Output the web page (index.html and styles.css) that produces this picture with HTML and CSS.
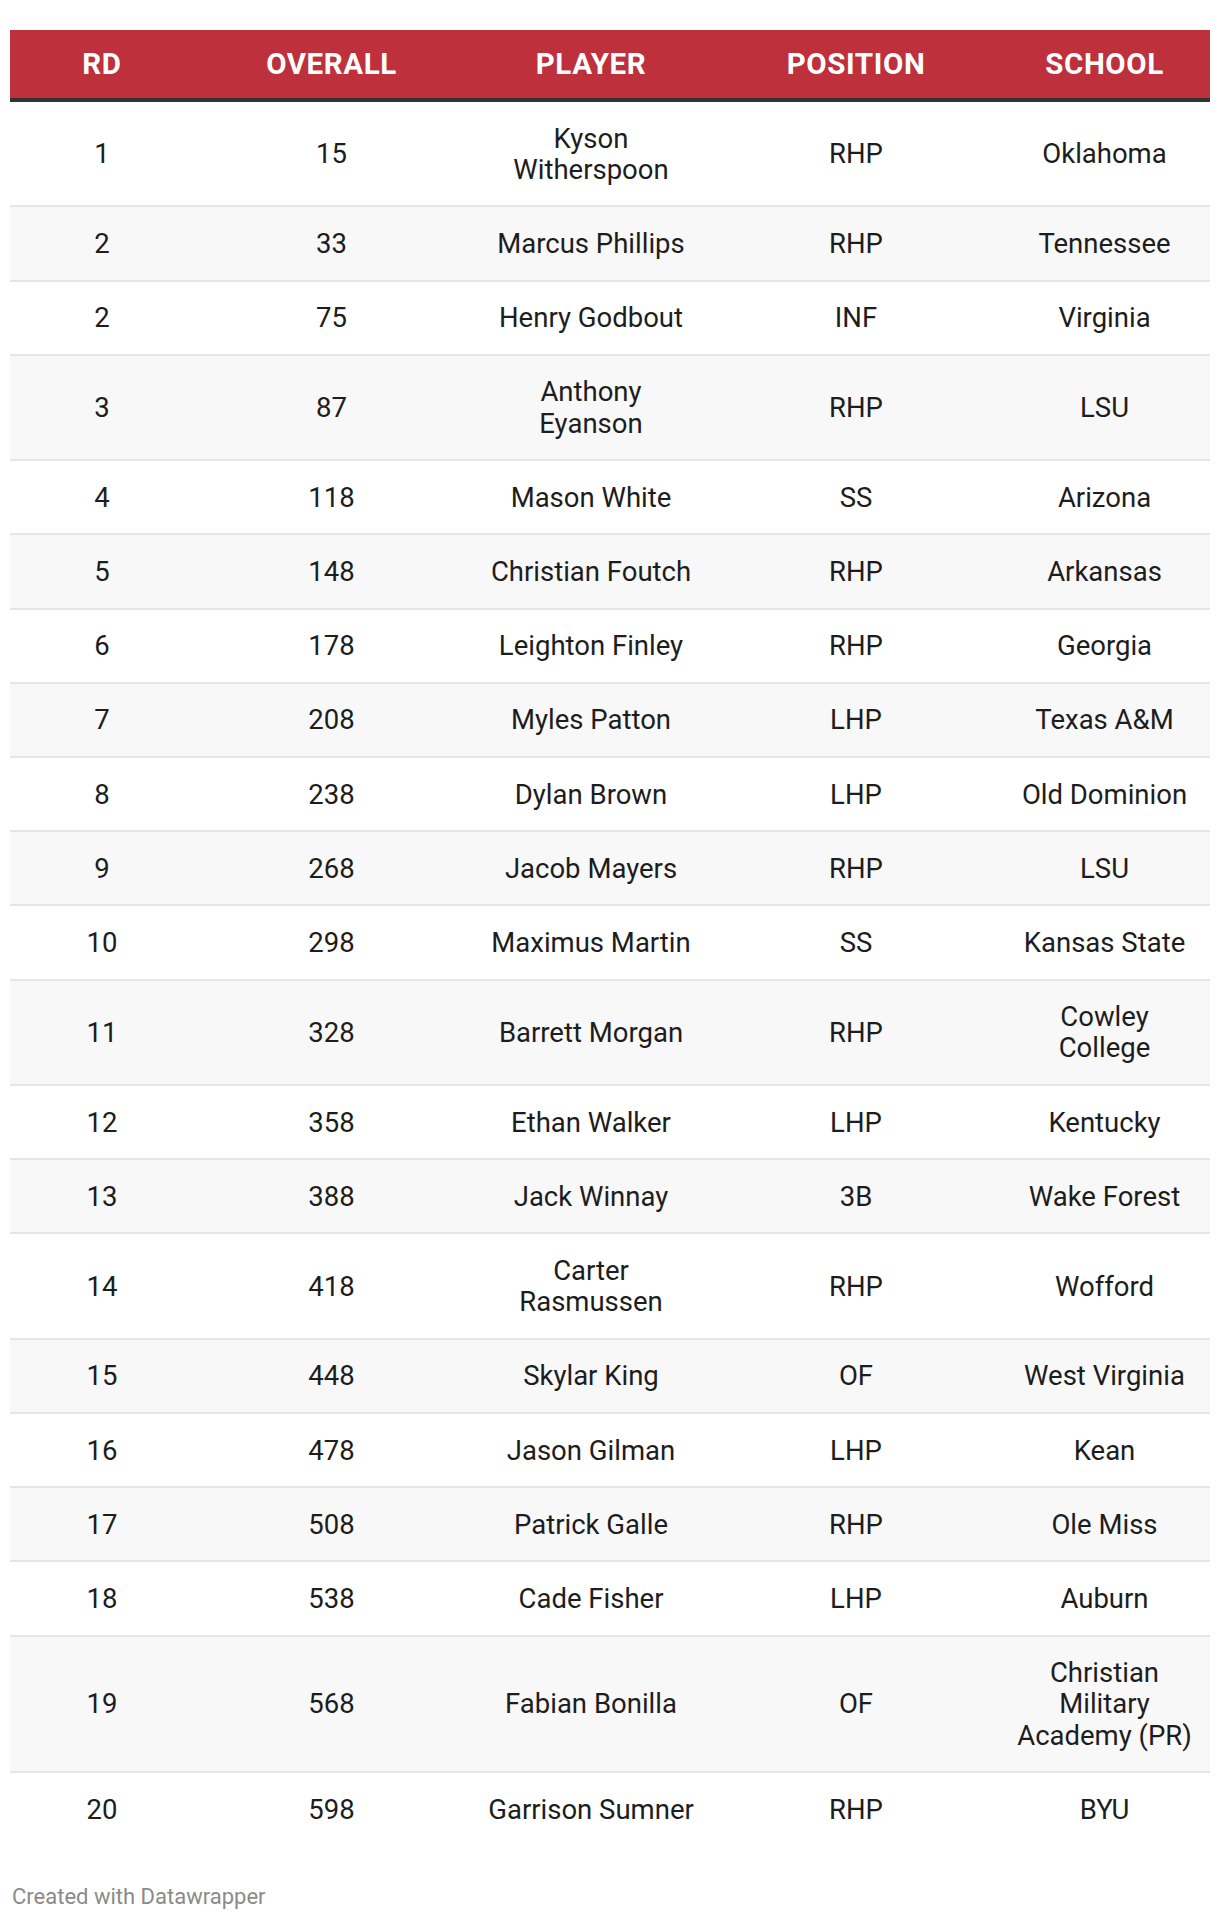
FILE: index.html
```html
<!DOCTYPE html>
<html lang="en">
<head>
<meta charset="utf-8">
<title>Draft picks</title>
<link rel="stylesheet" href="styles.css">
</head>
<body>
<div class="chart">
  <table class="picks">
    <colgroup>
      <col class="c-rd">
      <col class="c-overall">
      <col class="c-player">
      <col class="c-pos">
      <col class="c-school">
    </colgroup>
    <thead>
      <tr>
        <th>RD</th>
        <th>OVERALL</th>
        <th>PLAYER</th>
        <th>POSITION</th>
        <th>SCHOOL</th>
      </tr>
    </thead>
    <tbody>
      <tr><td>1</td><td>15</td><td>Kyson<br>Witherspoon</td><td>RHP</td><td>Oklahoma</td></tr>
      <tr><td>2</td><td>33</td><td>Marcus Phillips</td><td>RHP</td><td>Tennessee</td></tr>
      <tr><td>2</td><td>75</td><td>Henry Godbout</td><td>INF</td><td>Virginia</td></tr>
      <tr><td>3</td><td>87</td><td>Anthony<br>Eyanson</td><td>RHP</td><td>LSU</td></tr>
      <tr><td>4</td><td>118</td><td>Mason White</td><td>SS</td><td>Arizona</td></tr>
      <tr><td>5</td><td>148</td><td>Christian Foutch</td><td>RHP</td><td>Arkansas</td></tr>
      <tr><td>6</td><td>178</td><td>Leighton Finley</td><td>RHP</td><td>Georgia</td></tr>
      <tr><td>7</td><td>208</td><td>Myles Patton</td><td>LHP</td><td>Texas A&amp;M</td></tr>
      <tr><td>8</td><td>238</td><td>Dylan Brown</td><td>LHP</td><td>Old Dominion</td></tr>
      <tr><td>9</td><td>268</td><td>Jacob Mayers</td><td>RHP</td><td>LSU</td></tr>
      <tr><td>10</td><td>298</td><td>Maximus Martin</td><td>SS</td><td>Kansas State</td></tr>
      <tr><td>11</td><td>328</td><td>Barrett Morgan</td><td>RHP</td><td>Cowley<br>College</td></tr>
      <tr><td>12</td><td>358</td><td>Ethan Walker</td><td>LHP</td><td>Kentucky</td></tr>
      <tr><td>13</td><td>388</td><td>Jack Winnay</td><td>3B</td><td>Wake Forest</td></tr>
      <tr><td>14</td><td>418</td><td>Carter<br>Rasmussen</td><td>RHP</td><td>Wofford</td></tr>
      <tr><td>15</td><td>448</td><td>Skylar King</td><td>OF</td><td>West Virginia</td></tr>
      <tr><td>16</td><td>478</td><td>Jason Gilman</td><td>LHP</td><td>Kean</td></tr>
      <tr><td>17</td><td>508</td><td>Patrick Galle</td><td>RHP</td><td>Ole Miss</td></tr>
      <tr><td>18</td><td>538</td><td>Cade Fisher</td><td>LHP</td><td>Auburn</td></tr>
      <tr><td>19</td><td>568</td><td>Fabian Bonilla</td><td>OF</td><td>Christian<br>Military<br>Academy (PR)</td></tr>
      <tr><td>20</td><td>598</td><td>Garrison Sumner</td><td>RHP</td><td>BYU</td></tr>
    </tbody>
  </table>
  <div class="footer">Created with Datawrapper</div>
</div>
</body>
</html>
```

FILE: styles.css
```css
html, body {
  margin: 0;
  padding: 0;
  background: #ffffff;
}

body {
  font-family: Roboto, "Liberation Sans", Arial, sans-serif;
  color: #1d1d1d;
}

.chart {
  padding: 30px 10px 0 10px;
}

.picks {
  width: 1200px;
  border-collapse: collapse;
  table-layout: fixed;
}

.c-rd { width: 184px; }
.c-overall { width: 275px; }
.c-player { width: 244px; }
.c-pos { width: 286px; }
.c-school { width: 211px; }

.picks th {
  background: #bd303c;
  color: #ffffff;
  font-weight: 700;
  font-size: 29.5px;
  letter-spacing: 0.6px;
  line-height: 32px;
  padding: 18px 8px 18px 8px;
  text-align: center;
  border-bottom: 4px solid #333333;
  white-space: nowrap;
}

.picks td {
  font-size: 27.5px;
  line-height: 31.2px;
  padding: 20.5px 8px;
  text-align: center;
  vertical-align: middle;
  border-bottom: 2px solid #e5e5e5;
  white-space: nowrap;
}

.picks tbody tr:nth-child(even) td {
  background: #f8f8f8;
}

.picks tbody tr:last-child td {
  border-bottom: none;
}

.footer {
  margin-top: 39px;
  padding-left: 2px;
  font-size: 22px;
  line-height: 26px;
  color: #8a8a8a;
}
```
